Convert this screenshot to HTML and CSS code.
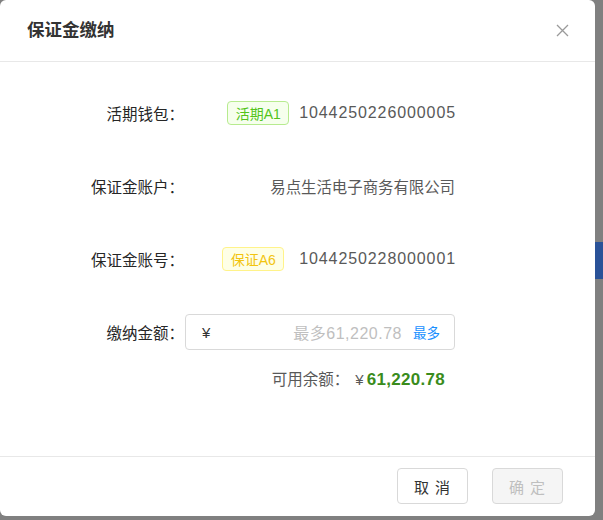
FILE: index.html
```html
<!DOCTYPE html>
<html lang="zh-CN">
<head>
<meta charset="utf-8">
<title>保证金缴纳</title>
<link rel="stylesheet" href="styles.css">
</head>
<body>
<div class="screen">
  <div class="modal">
    <div class="modal-header">
      <div class="modal-title">保证金缴纳</div>
      <button class="modal-close" type="button" aria-label="关闭">
        <svg width="13" height="13" viewBox="0 0 13 13"><path d="M1 1L12 12M12 1L1 12" stroke="#9a9a9a" stroke-width="1.3" fill="none"/></svg>
      </button>
    </div>
    <div class="modal-body">
      <div class="form">
        <div class="form-label">活期钱包：</div>
        <div class="form-value">
          <span class="tag tag-green">活期A1</span>
          <span class="num">1044250226000005</span>
        </div>

        <div class="form-label">保证金账户：</div>
        <div class="form-value">
          <span class="text">易点生活电子商务有限公司</span>
        </div>

        <div class="form-label">保证金账号：</div>
        <div class="form-value">
          <span class="tag tag-yellow">保证A6</span>
          <span class="num">1044250228000001</span>
        </div>

        <div class="form-label">缴纳金额：</div>
        <div class="form-value">
          <div class="amount-input">
            <span class="currency">¥</span>
            <span class="placeholder">最多61,220.78</span>
            <a class="max-link" href="#">最多</a>
          </div>
        </div>
      </div>
      <div class="balance">
        <span class="balance-label">可用余额：</span>
        <span class="balance-cur">¥</span>
        <span class="balance-num">61,220.78</span>
      </div>
    </div>
    <div class="modal-footer">
      <button class="btn" type="button">取 消</button>
      <button class="btn btn-disabled" type="button" disabled>确 定</button>
    </div>
  </div>
  <div class="side-strip">
    <div class="side-tab"></div>
  </div>
</div>
</body>
</html>
```

FILE: styles.css
```css
* {
  box-sizing: border-box;
}

html, body {
  margin: 0;
  padding: 0;
}

body {
  background: #808080;
  font-family: "Liberation Sans", "Noto Sans CJK SC", sans-serif;
  color: #333;
}

.screen {
  display: flex;
  width: 603px;
  height: 520px;
  overflow: hidden;
}

/* dialog */
.modal {
  width: 595px;
  height: 516px;
  flex: none;
  background: #fff;
  border-radius: 6px;
  display: flex;
  flex-direction: column;
}

.modal-header {
  height: 62px;
  flex: none;
  border-bottom: 1px solid #e8e8e8;
  display: flex;
  align-items: center;
  justify-content: space-between;
  padding: 0 26px 0 27px;
}

.modal-title {
  font-size: 17.5px;
  font-weight: bold;
  color: #333;
  line-height: 24px;
  margin-top: -1px;
}

.modal-close {
  border: 0;
  background: none;
  padding: 0;
  width: 13px;
  height: 13px;
  display: flex;
  margin-top: -1px;
}

.modal-body {
  flex: 1;
  padding-top: 33px;
}

.form {
  display: grid;
  grid-template-columns: 185px 270px;
  grid-auto-rows: 36px;
  row-gap: 37px;
  font-size: 15px;
}

.form-label {
  display: flex;
  align-items: center;
  justify-content: flex-end;
  font-size: 15.5px;
  color: #262626;
  padding-right: 1px;
}

.form-value {
  display: flex;
  align-items: center;
  justify-content: flex-end;
  color: #595959;
}

.num {
  font-size: 16px;
  letter-spacing: 0.9px;
  margin-right: -1px;
  color: #595959;
}

.text {
  font-size: 15.4px;
  color: #595959;
}

.tag {
  display: inline-flex;
  align-items: center;
  justify-content: center;
  width: 62px;
  height: 24px;
  border-radius: 4px;
  font-size: 14px;
  border: 1px solid;
}

.tag-green {
  color: #52c41a;
  background: #f6ffed;
  border-color: #b7eb8f;
  margin-right: 10px;
}

.tag-yellow {
  color: #f2c40f;
  background: #feffe6;
  border-color: #fff38a;
  margin-right: 15px;
}

.amount-input {
  width: 270px;
  height: 36px;
  border: 1px solid #d9d9d9;
  border-radius: 4px;
  display: flex;
  align-items: center;
  padding: 0 14px 0 16px;
}

.currency {
  font-size: 15px;
  color: #333;
}

.placeholder {
  flex: 1;
  text-align: right;
  font-size: 16px;
  letter-spacing: 0.5px;
  color: #bfbfbf;
  margin-right: 11px;
}

.max-link {
  font-size: 13.5px;
  color: #1890ff;
  text-decoration: none;
}

.balance {
  width: 445px;
  margin-top: 18px;
  display: flex;
  justify-content: flex-end;
  align-items: baseline;
  line-height: 24px;
}

.balance-label {
  font-size: 15.5px;
  color: #595959;
}

.balance-cur {
  font-size: 15px;
  color: #595959;
  margin: 0 3px 0 6px;
}

.balance-num {
  font-size: 17px;
  font-weight: bold;
  letter-spacing: 0.3px;
  color: #3a8c1c;
}

.modal-footer {
  height: 60px;
  flex: none;
  border-top: 1px solid #e8e8e8;
  display: flex;
  align-items: center;
  justify-content: flex-end;
  gap: 24px;
  padding: 0 32px 1px 0;
}

.btn {
  width: 71px;
  height: 36px;
  border: 1px solid #d9d9d9;
  border-radius: 4px;
  background: #fff;
  font-family: inherit;
  font-size: 15px;
  letter-spacing: 1px;
  color: #333;
  padding: 0;
}

.btn-disabled {
  background: #f5f5f5;
  color: #bfbfbf;
}

/* page behind the overlay */
.side-strip {
  flex: 1;
  padding-top: 242px;
}

.side-tab {
  height: 37px;
  background: #2a5298;
}
```
